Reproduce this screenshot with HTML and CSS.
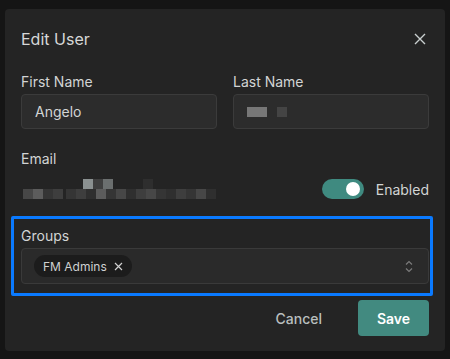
FILE: index.html
```html
<!DOCTYPE html>
<html>
	<head>
		<meta charset="UTF-8">
		<title>Edit User</title>
		<link rel="stylesheet" href="styles.css">
	</head>
	<body>
		<div class="backdrop">
			<div class="modal">
				<div class="modal-header">
					<h2>Edit User</h2>
					<svg class="close" width="12" height="12" viewBox="0 0 12 12">
						<path d="M1 1L11 11M11 1L1 11" stroke="#c9cfcf" stroke-width="1.4" fill="none"/>
					</svg>
				</div>
				<div class="name-row">
					<div class="field">
						<label for="first">First Name</label>
						<div class="input" id="first">Angelo</div>
					</div>
					<div class="field">
						<label for="last">Last Name</label>
						<div class="input" id="last">
							<span class="blur b1"></span>
							<span class="blur b2"></span>
						</div>
					</div>
				</div>
				<div class="field email">
					<label>Email</label>
					<div class="email-row">
						<div class="email-mask">
							<div class="mask-row top">
								<span class="gap6"></span><span class="m light"></span><span class="m dim"></span><span class="m mid"></span><span class="gap3"></span><span class="m faint"></span>
							</div>
							<div class="mask-row">
								<span class="m s1"></span><span class="m s2"></span><span class="m s3"></span><span class="m s4"></span><span class="gap1"></span><span class="m s3"></span><span class="m s4"></span><span class="m s5"></span><span class="m s2"></span><span class="m s3"></span><span class="m s1"></span><span class="m s5"></span><span class="m s4"></span><span class="m s1"></span><span class="m s3"></span><span class="m s5"></span><span class="m s4"></span><span class="m s3"></span><span class="m s1"></span><span class="m s5"></span>
							</div>
						</div>
						<div class="status">
							<span class="toggle"><span class="knob"></span></span>
							<span>Enabled</span>
						</div>
					</div>
				</div>
				<div class="groups">
					<label>Groups</label>
					<div class="select">
						<span class="chip">FM Admins
							<svg width="9" height="9" viewBox="0 0 9 9"><path d="M1 1L8 8M8 1L1 8" stroke="#cfcfcf" stroke-width="1.2" fill="none"/></svg>
						</span>
						<svg class="chevron" width="8" height="13" viewBox="0 0 8 13">
							<path d="M1 4.5L4 1.5L7 4.5M1 8.5L4 11.5L7 8.5" stroke="#7b7b7b" stroke-width="1.2" fill="none"/>
						</svg>
					</div>
				</div>
				<div class="modal-footer">
					<button class="btn cancel">Cancel</button>
					<button class="btn save">Save</button>
				</div>
			</div>
		</div>
	</body>
</html>
```

FILE: styles.css
```css
* {
	margin: 0;
	padding: 0;
	box-sizing: border-box;
}
body {
	background-color: #151515;
	font-family: Inter, "Noto Sans", sans-serif;
	color: #d2d4d4;
	width: 450px;
	height: 359px;
	overflow: hidden;
}
.backdrop {
	padding: 9px 5px 8px 5px;
}
.modal {
	width: 440px;
	height: 342px;
	background-color: #242424;
	border-radius: 4px;
	padding: 0 16px;
}
.modal-header {
	display: flex;
	justify-content: space-between;
	align-items: center;
	padding-top: 20px;
	padding-right: 3px;
	height: 40px;
}
.modal-header h2 {
	font-size: 16px;
	font-weight: 400;
	line-height: 20px;
	color: #d6d8d8;
}
label {
	display: block;
	font-size: 14px;
	line-height: 18px;
	color: #d2d4d4;
}
.name-row {
	display: flex;
	gap: 16px;
	margin-top: 24px;
}
.name-row .field {
	flex: 1;
}
.input {
	display: flex;
	align-items: center;
	gap: 10px;
	height: 35px;
	margin-top: 3px;
	padding-left: 13px;
	background-color: #2c2c2c;
	border: 1px solid #3b3b3b;
	border-radius: 4px;
	font-size: 14px;
}
.input .blur {
	display: inline-block;
	height: 10px;
}
.b1 {
	width: 20px;
	background-color: #777;
}
.b2 {
	width: 10px;
	background-color: #444;
}
.email {
	margin-top: 21px;
}
.email-row {
	display: flex;
	justify-content: space-between;
	align-items: center;
	margin-top: 11px;
	height: 20px;
}
.email-mask {
	padding-left: 2px;
}
.mask-row {
	display: flex;
	height: 10px;
}
.mask-row span {
	display: block;
	width: 10px;
	height: 10px;
}
.gap6 {
	width: 60px !important;
}
.gap3 {
	width: 30px !important;
}
.gap1 {
	width: 3px !important;
}
.light {
	background-color: #8b9191;
}
.dim {
	background-color: #3f3f3f;
}
.mid {
	background-color: #6b6f6f;
}
.faint {
	background-color: #2e2e2e;
}
.s1 {
	background-color: #474747;
}
.s2 {
	background-color: #5c5c5c;
}
.s3 {
	background-color: #353535;
}
.s4 {
	background-color: #3e3e3e;
}
.s5 {
	background-color: #2f2f2f;
}
.status {
	display: flex;
	align-items: center;
	gap: 12px;
	font-size: 14px;
}
.toggle {
	display: flex;
	align-items: center;
	justify-content: flex-end;
	width: 42px;
	height: 20px;
	padding-right: 4px;
	background-color: #3f8a80;
	border-radius: 10px;
}
.knob {
	width: 14px;
	height: 14px;
	border-radius: 50%;
	background-color: #fff;
}
.groups {
	margin: 17px -4px 0 -10px;
	padding: 8px 1px 9px 7px;
	border: 3px solid #0a7aff;
	border-radius: 2px;
}
.select {
	display: flex;
	justify-content: space-between;
	align-items: center;
	height: 36px;
	margin-top: 3px;
	padding: 0 15px 0 12px;
	background-color: #2a2a2a;
	border: 1px solid #3a3a3a;
	border-radius: 4px;
}
.chip {
	display: flex;
	align-items: center;
	gap: 7px;
	height: 22px;
	padding: 0 9px 0 9px;
	background-color: #1c1c1c;
	border-radius: 11px;
	font-size: 12px;
	color: #cfd1d1;
}
.modal-footer {
	display: flex;
	justify-content: flex-end;
	align-items: center;
	gap: 20px;
	margin-top: 4px;
}
.btn {
	height: 36px;
	border: none;
	border-radius: 4px;
	font-family: Inter, "Noto Sans", sans-serif;
	font-size: 14px;
	cursor: pointer;
}
.cancel {
	padding: 0 16px;
	background: none;
	color: #b9bfbf;
	font-weight: 500;
}
.save {
	width: 71px;
	background-color: #428a80;
	color: #fff;
	font-weight: 600;
}
```
